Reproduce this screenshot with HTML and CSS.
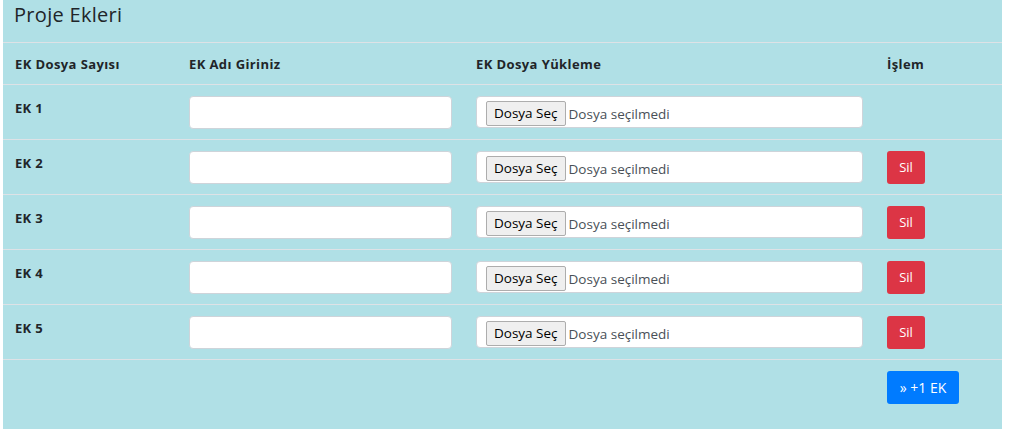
FILE: index.html
```html
<!DOCTYPE html>
<html lang="tr">
<head>
<meta charset="utf-8">
<title>Proje Ekleri</title>
<link rel="stylesheet" href="styles.css">
</head>
<body>
<div class="page">
  <section class="panel">
    <h4 class="panel-title">Proje Ekleri</h4>
    <table class="attach-table">
      <colgroup>
        <col class="c-num">
        <col class="c-name">
        <col class="c-file">
        <col class="c-act">
      </colgroup>
      <thead>
        <tr>
          <th>EK Dosya Sayısı</th>
          <th>EK Adı Giriniz</th>
          <th>EK Dosya Yükleme</th>
          <th>İşlem</th>
        </tr>
      </thead>
      <tbody>
        <tr>
          <th class="row-label">EK 1</th>
          <td><input class="field" type="text"></td>
          <td><label class="file-field"><span class="file-btn">Dosya Seç</span><span class="file-name">Dosya seçilmedi</span></label></td>
          <td></td>
        </tr>
        <tr>
          <th class="row-label">EK 2</th>
          <td><input class="field" type="text"></td>
          <td><label class="file-field"><span class="file-btn">Dosya Seç</span><span class="file-name">Dosya seçilmedi</span></label></td>
          <td><button class="btn btn-danger" type="button">Sil</button></td>
        </tr>
        <tr>
          <th class="row-label">EK 3</th>
          <td><input class="field" type="text"></td>
          <td><label class="file-field"><span class="file-btn">Dosya Seç</span><span class="file-name">Dosya seçilmedi</span></label></td>
          <td><button class="btn btn-danger" type="button">Sil</button></td>
        </tr>
        <tr>
          <th class="row-label">EK 4</th>
          <td><input class="field" type="text"></td>
          <td><label class="file-field"><span class="file-btn">Dosya Seç</span><span class="file-name">Dosya seçilmedi</span></label></td>
          <td><button class="btn btn-danger" type="button">Sil</button></td>
        </tr>
        <tr>
          <th class="row-label">EK 5</th>
          <td><input class="field" type="text"></td>
          <td><label class="file-field"><span class="file-btn">Dosya Seç</span><span class="file-name">Dosya seçilmedi</span></label></td>
          <td><button class="btn btn-danger" type="button">Sil</button></td>
        </tr>
        <tr class="add-row">
          <td></td>
          <td></td>
          <td></td>
          <td><button class="btn btn-primary" type="button">» +1 EK</button></td>
        </tr>
      </tbody>
    </table>
  </section>
</div>
</body>
</html>
```

FILE: styles.css
```css
* { box-sizing: border-box; }

html, body {
  margin: 0;
  background: #fff;
}

body {
  font-family: "Open Sans", "Noto Sans", Arial, sans-serif;
  color: #212529;
}

.page {
  padding-left: 3px;
}

.panel {
  width: 999px;
  min-height: 429px;
  background: #b0e0e6;
}

.panel-title {
  margin: 0;
  height: 42px;
  padding: 0 11px;
  font-size: 20px;
  font-weight: 400;
  letter-spacing: 0.3px;
  line-height: 30px;
}

.attach-table {
  width: 100%;
  border-collapse: collapse;
  table-layout: fixed;
}

.c-num { width: 174px; }
.c-name { width: 287px; }
.c-file { width: 411px; }
.c-act { width: 127px; }

.attach-table th,
.attach-table td {
  border-top: 1px solid #dee2e6;
  padding: 11px 12px 10px;
  text-align: left;
  vertical-align: top;
}

.attach-table thead th {
  height: 42px;
  padding: 0 12px;
  vertical-align: middle;
  font-size: 13px;
  font-weight: 700;
  letter-spacing: 0.4px;
}

.attach-table .row-label {
  padding-top: 13px;
  font-size: 13px;
  font-weight: 700;
  letter-spacing: 0.3px;
  line-height: 20px;
}

.field {
  display: block;
  width: 100%;
  height: 33px;
  margin: 0;
  border: 1px solid #ced4da;
  border-radius: 4px;
  background: #fff;
  font: inherit;
}

.file-field {
  display: flex;
  align-items: flex-end;
  width: 100%;
  height: 32px;
  padding: 0 9px 1px;
  border: 1px solid #ced4da;
  border-radius: 4px;
  background: #fff;
  font-size: 13.5px;
}

.file-btn {
  height: 25px;
  padding: 0 7px;
  border: 1px solid #adadad;
  border-radius: 2px;
  background: #efefef;
  color: #000;
  line-height: 23px;
}

.file-name {
  margin-left: 3px;
  color: #495057;
  line-height: 24px;
}

.btn {
  height: 33px;
  padding: 0;
  border: 0;
  border-radius: 3px;
  color: #fff;
  font-family: inherit;
  font-size: 13px;
  line-height: 33px;
  cursor: pointer;
}

.btn-danger {
  width: 38px;
  background: #dc3545;
}

.btn-primary {
  width: 72px;
  background: #007bff;
  font-size: 14px;
}

.add-row td {
  height: 70px;
}
```
